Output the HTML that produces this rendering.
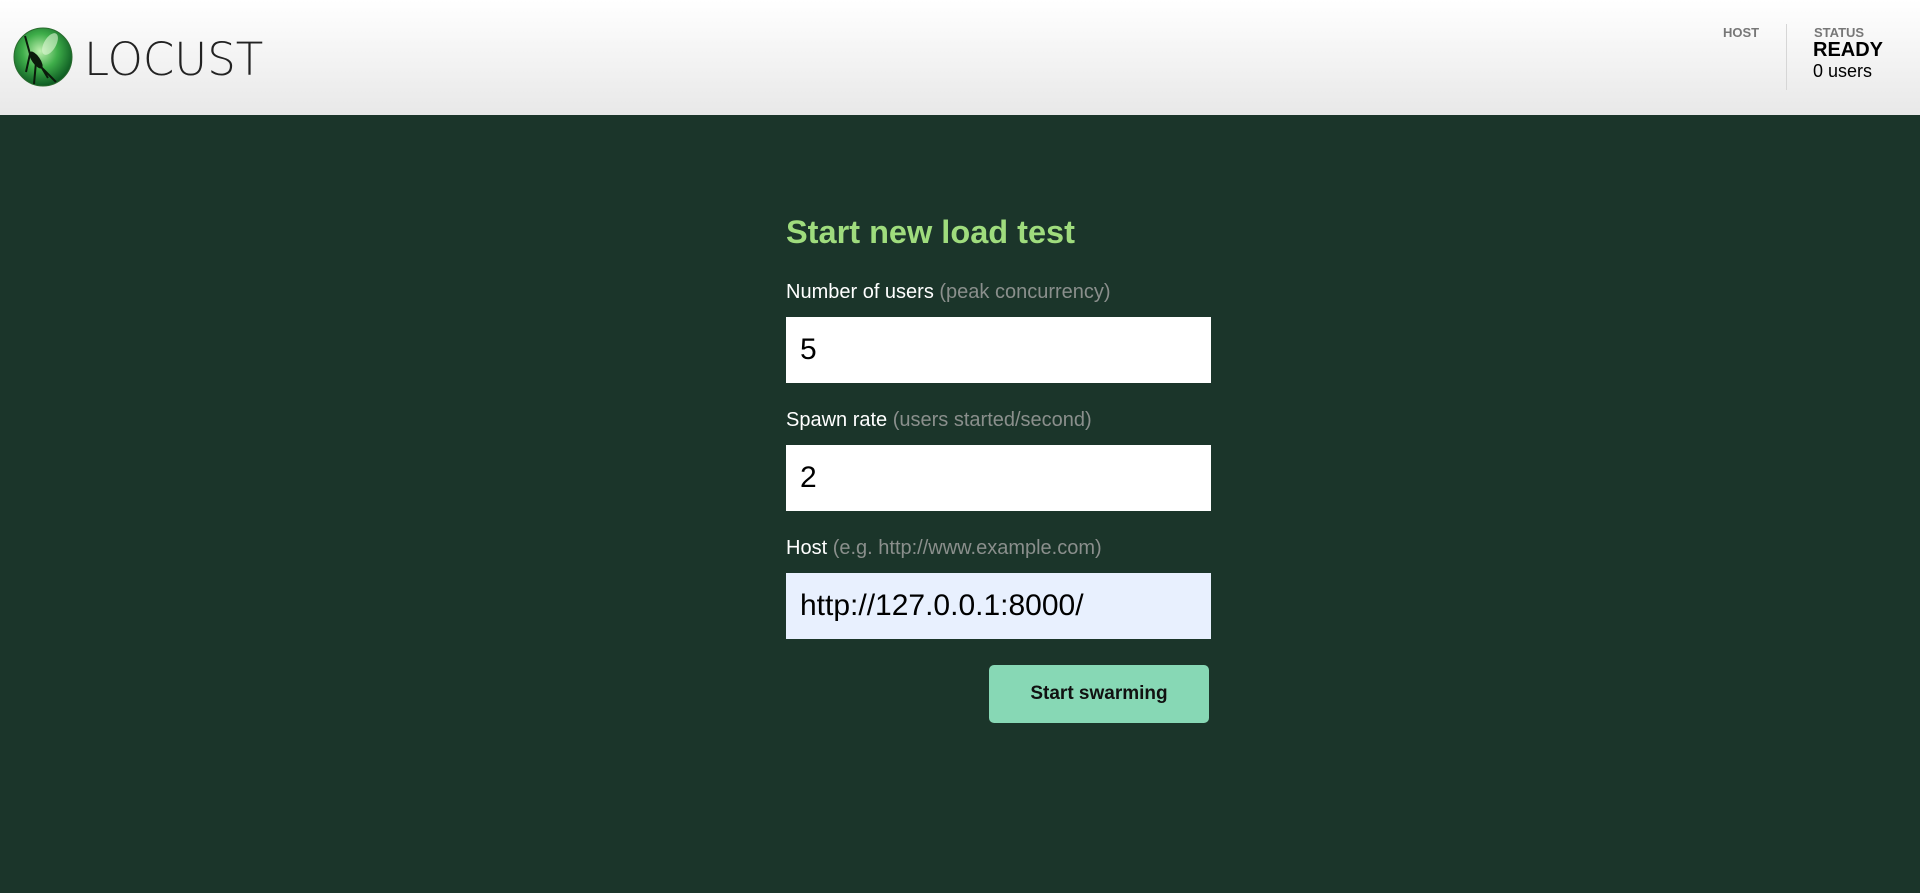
<!DOCTYPE html>
<html><head><meta charset="utf-8"><style>
*{margin:0;padding:0;box-sizing:border-box}
body{width:1920px;height:893px;background:#1b352a;font-family:"Liberation Sans",Arial,sans-serif;position:relative;overflow:hidden}
.hdr{position:absolute;left:0;top:0;width:1920px;height:115px;background:linear-gradient(#fff,#e8e8e8)}
.a{position:absolute;white-space:nowrap}
.in{position:absolute;left:786px;width:425px;height:66px;background:#fff;font-size:30px;color:#000;padding-left:14px;line-height:66px}
.lab{font-size:20px;color:#fff}
.lab span{color:#8a8f8c}
</style></head><body>
<div class="hdr">
<svg class="a" style="left:12px;top:26px" width="62" height="62" viewBox="0 0 62 62">
<defs><radialGradient id="g" cx="0.45" cy="0.4" r="0.6"><stop offset="0" stop-color="#bff0b0"/><stop offset="0.5" stop-color="#3fae4a"/><stop offset="1" stop-color="#0d5a22"/></radialGradient></defs>
<circle cx="31" cy="31" r="29" fill="url(#g)" stroke="#2a6a2e" stroke-width="1"/>
<ellipse cx="38" cy="18" rx="6" ry="12" fill="#dff7d5" opacity="0.6" transform="rotate(30 38 18)"/>
<path d="M13 10 L18 28 L30 42 L36 52 M18 28 L14 46 M24 36 L22 58 M30 42 L44 56" stroke="#0b1a0b" stroke-width="2" fill="none"/>
<ellipse cx="24" cy="34" rx="4" ry="10" fill="#0b1a0b" transform="rotate(-35 24 34)"/>
</svg>
<div class="a" style="left:84px;top:33px;font-size:45px;color:#222;font-family:'DejaVu Sans','Liberation Sans',sans-serif;font-weight:200">LOCUST</div>
<div class="a" style="left:1723px;top:25px;font-size:13px;font-weight:bold;color:#777">HOST</div>
<div class="a" style="left:1786px;top:24px;width:1px;height:66px;background:#d6d6d6"></div>
<div class="a" style="left:1814px;top:25px;font-size:13px;font-weight:bold;color:#777">STATUS</div>
<div class="a" style="left:1813px;top:39px;font-size:20px;font-weight:bold;color:#000">READY</div>
<div class="a" style="left:1813px;top:61px;font-size:18px;color:#000">0 users</div>
</div>
<div class="a" style="left:786px;top:214px;font-size:32.5px;font-weight:bold;color:#9fdc7d">Start new load test</div>
<div class="a lab" style="left:786px;top:281px">Number of users <span>(peak concurrency)</span></div>
<div class="in" style="top:317px">5</div>
<div class="a lab" style="left:786px;top:409px">Spawn rate <span>(users started/second)</span></div>
<div class="in" style="top:445px">2</div>
<div class="a lab" style="left:786px;top:537px">Host <span>(e.g. http://www.example.com)</span></div>
<div class="in" style="top:573px;background:#e8f0fe">http://127.0.0.1:8000/</div>
<div class="a" style="left:989px;top:665px;width:220px;height:58px;background:#87d8b5;border-radius:5px;font-size:19px;font-weight:bold;color:#111;text-align:center;line-height:58px">Start swarming</div>
</body></html>
